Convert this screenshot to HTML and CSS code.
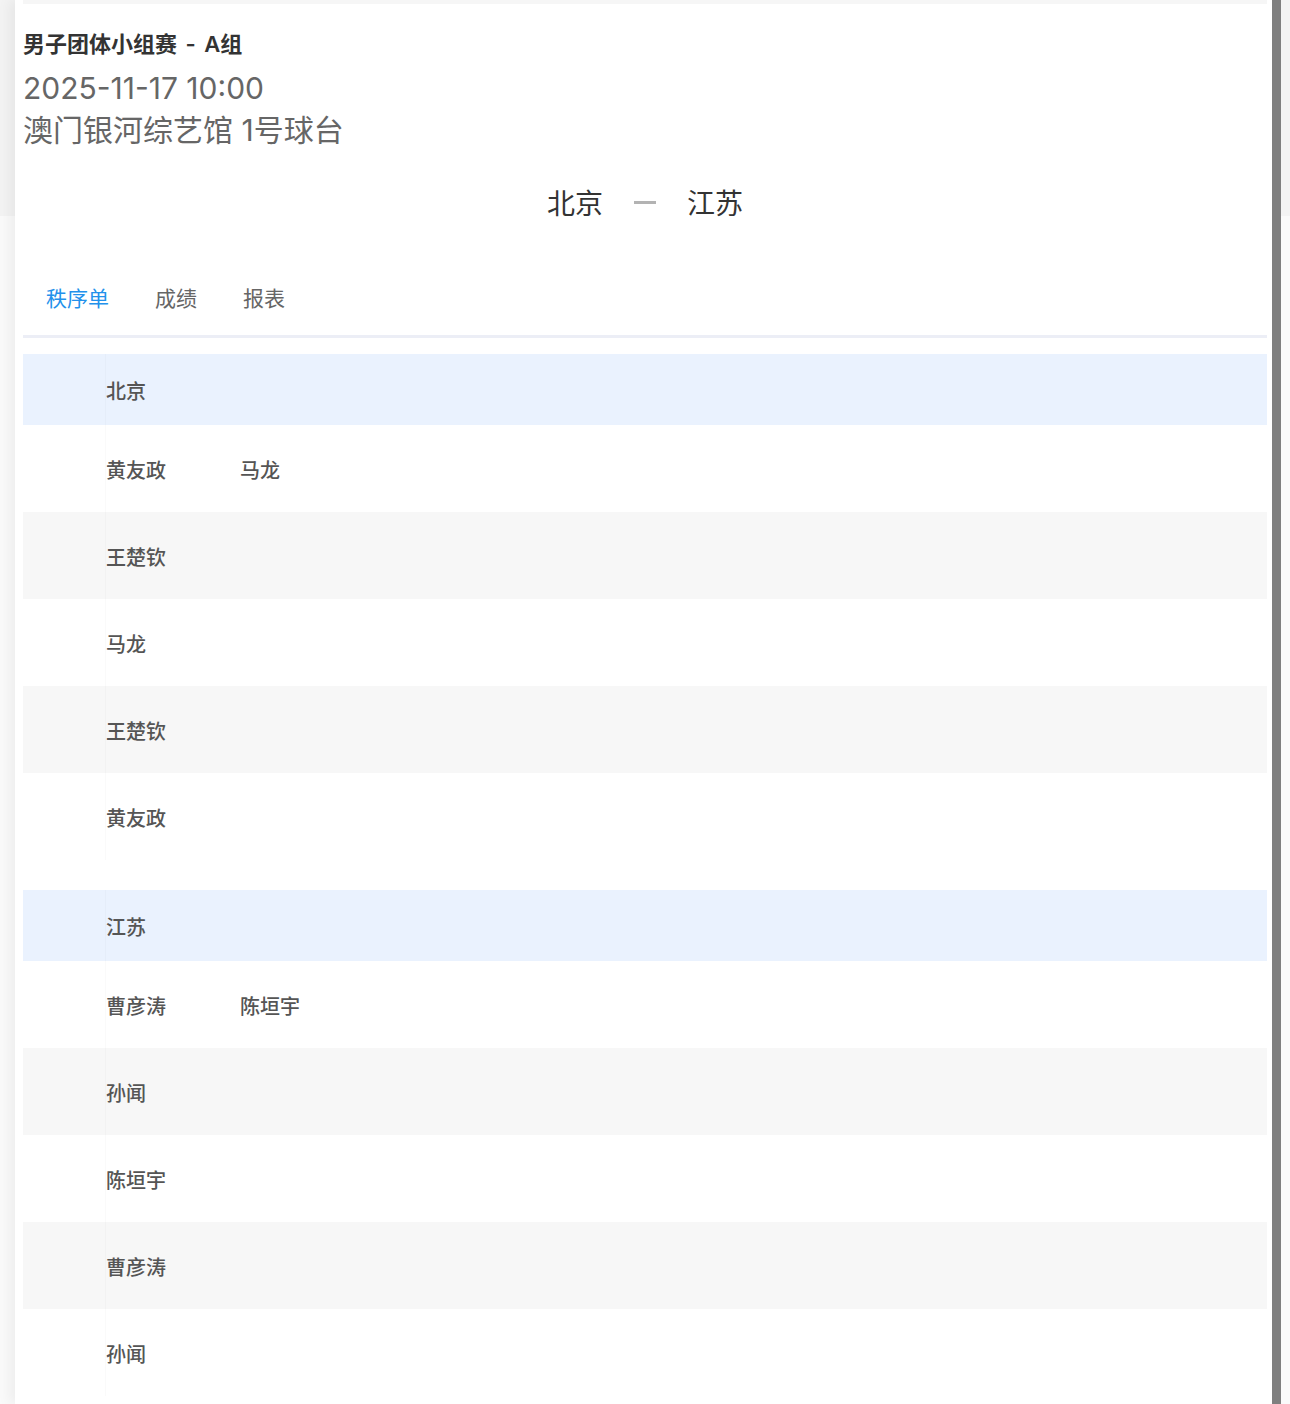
FILE: index.html
```html
<!DOCTYPE html>
<html lang="zh-CN">
<head>
    <meta charset="UTF-8">
    <meta name="viewport" content="width=device-width, initial-scale=1.0">
    <title>秩序单</title>
    <link rel="stylesheet" href="styles.css">
</head>
<body>
    <div class="page">
        <div class="drawer">
            <div class="top-strip"></div>

            <!-- Match info -->
            <div class="match-title">男子团体小组赛 - A组</div>
            <div class="match-time">2025-11-17 10:00</div>
            <div class="match-venue">澳门银河综艺馆 1号球台</div>

            <div class="teams">
                <span class="team">北京</span>
                <span class="vs"></span>
                <span class="team">江苏</span>
            </div>

            <!-- Tabs -->
            <div class="tabs">
                <div class="tab active">秩序单</div>
                <div class="tab">成绩</div>
                <div class="tab">报表</div>
            </div>

            <!-- Lineup: Beijing -->
            <div class="lineup">
                <div class="row head"><div class="cell"></div><div class="cell name">北京</div><div class="cell"></div></div>
                <div class="row"><div class="cell"></div><div class="cell name">黄友政</div><div class="cell name">马龙</div></div>
                <div class="row alt"><div class="cell"></div><div class="cell name">王楚钦</div><div class="cell"></div></div>
                <div class="row"><div class="cell"></div><div class="cell name">马龙</div><div class="cell"></div></div>
                <div class="row alt"><div class="cell"></div><div class="cell name">王楚钦</div><div class="cell"></div></div>
                <div class="row"><div class="cell"></div><div class="cell name">黄友政</div><div class="cell"></div></div>
            </div>

            <!-- Lineup: Jiangsu -->
            <div class="lineup">
                <div class="row head"><div class="cell"></div><div class="cell name">江苏</div><div class="cell"></div></div>
                <div class="row"><div class="cell"></div><div class="cell name">曹彦涛</div><div class="cell name">陈垣宇</div></div>
                <div class="row alt"><div class="cell"></div><div class="cell name">孙闻</div><div class="cell"></div></div>
                <div class="row"><div class="cell"></div><div class="cell name">陈垣宇</div><div class="cell"></div></div>
                <div class="row alt"><div class="cell"></div><div class="cell name">曹彦涛</div><div class="cell"></div></div>
                <div class="row"><div class="cell"></div><div class="cell name">孙闻</div><div class="cell"></div></div>
            </div>
        </div>
        <div class="scrollbar"></div>
    </div>
</body>
</html>
```

FILE: styles.css
```css
html, body {
    margin: 0;
    padding: 0;
}
body {
    font-family: Inter, "Noto Sans CJK SC", sans-serif;
    background: linear-gradient(#f3f3f3 0, #f3f3f3 216px, #fafafa 216px);
    color: #333;
    height: 1404px;
    overflow: hidden;
}
.page {
    display: flex;
    height: 1404px;
}
.drawer {
    width: 1244px;
    margin-left: 15px;
    padding: 0 5px 0 8px;
    background: #fff;
    box-shadow: -6px 0 12px rgba(0, 0, 0, 0.05);
}
.scrollbar {
    width: 9px;
    background: #7f7f7f;
}
.top-strip {
    height: 4px;
    background: #f6f6f6;
}
.match-title {
    margin-top: 25px;
    font-size: 22px;
    line-height: 30px;
    font-weight: 600;
    color: #333;
    word-spacing: 3px;
}
.match-time, .match-venue {
    font-size: 30px;
    line-height: 42px;
    color: #666;
}
.match-time {
    margin-top: 8px;
}
.teams {
    margin-top: 31px;
    display: flex;
    justify-content: center;
    align-items: center;
    height: 40px;
}
.team {
    font-size: 28px;
    color: #333;
}
.vs {
    display: inline-block;
    width: 22px;
    height: 3px;
    margin: 0 31px;
    background: #b3b3b3;
}
.tabs {
    margin-top: 41px;
    display: flex;
    height: 68px;
    padding-bottom: 4px;
    align-items: center;
    border-bottom: 3px solid #eceef6;
}
.tab {
    padding: 0 23px;
    font-size: 21px;
    color: #666;
}
.tab.active {
    color: #2391eb;
}
.lineup {
    margin-top: 16px;
}
.lineup + .lineup {
    margin-top: 30px;
}
.row {
    display: grid;
    grid-template-columns: 82px 135px 1fr;
    height: 87px;
    font-size: 20px;
    font-weight: 500;
    color: #555;
}
.row .cell {
    display: flex;
    align-items: center;
    padding-top: 1px;
}
.row .cell:nth-child(2) {
    border-left: 1px solid rgba(0, 0, 0, 0.02);
}
.row.head {
    height: 71px;
    background: #eaf2fe;
}
.row.alt {
    background: #f7f7f7;
}
```
